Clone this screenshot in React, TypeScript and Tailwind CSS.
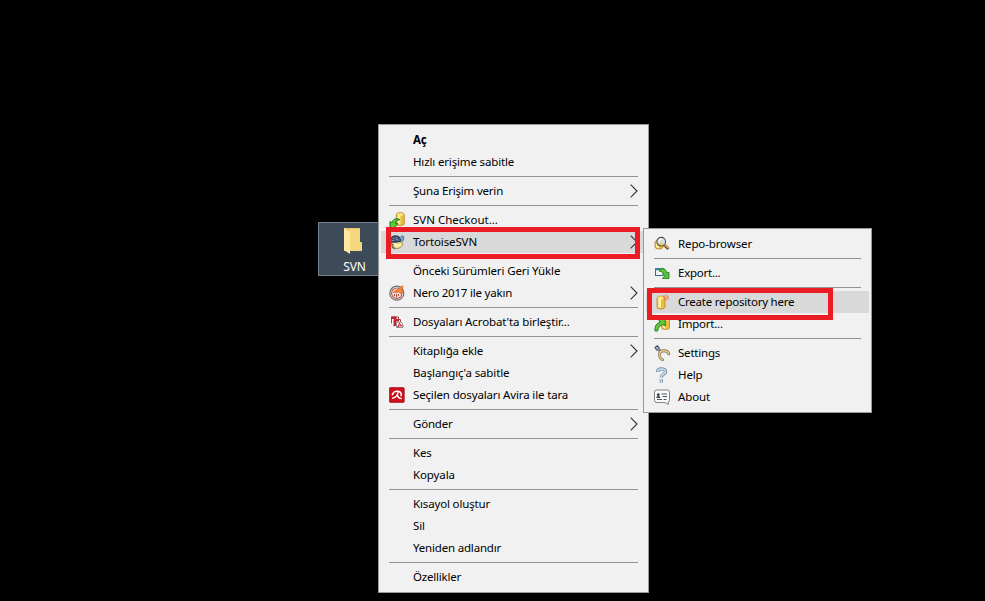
import type { ReactNode } from "react";

type Entry = { label: string; icon?: ReactNode; arrow?: boolean; bold?: boolean; active?: boolean; track?: string } | null;

function Cylinder({ x, y, h = 12 }: { x: number; y: number; h?: number }) {
  return (
    <g transform={`translate(${x} ${y})`}>
      <path d={`M0 2Q0 0 4 0T8 2V${h - 2}Q8 ${h} 4 ${h}T0 ${h - 2}Z`} fill="#e9bd3e" stroke="#b8862b" strokeWidth=".8" />
      <path d={`M1.2 3V${h - 2}Q2 ${h - 1} 4 ${h - 1}V3Z`} fill="#fff0a0" />
      <ellipse cx="4" cy="2" rx="3.3" ry="1.4" fill="#ffe98d" />
    </g>
  );
}

function Icon({ children }: { children: ReactNode }) {
  return <svg className="size-4 shrink-0" viewBox="0 0 16 16" fill="none">{children}</svg>;
}

const checkout = (
  <Icon>
    <Cylinder x={7.3} y={0.6} h={13} />
    <path d="M11 7.6C8 7.8 6.6 9.2 6.4 11.2L9 11.8 5 15.8H1V9.5L3 10.8C3.8 7.4 6.8 5.6 11 7.6Z" fill="#5ccb3a" stroke="#16791b" strokeWidth="1" />
  </Icon>
);
const importIcon = (
  <Icon>
    <Cylinder x={7.5} y={1.5} h={12} />
    <path d="M1 15C.5 9.5 3 7 6 6.5L4.5 3.3H11.3V10L8.8 8.6C5.5 9.5 4.3 11.5 3.6 15Z" fill="#65c63a" stroke="#16791b" strokeWidth=".9" />
  </Icon>
);
const tortoise = (
  <Icon>
    <path d="M1.5 8.5Q5 7 12.5 8L14 10Q12 14.8 7 14.7 2 14.2 1.5 8.5Z" fill="#e6d68c" stroke="#8e8048" strokeWidth=".8" />
    <path d="M.8 7.5Q1 2 6.5 1.8 11.5 1.8 11.8 7Q7 9.3.8 7.5Z" fill="#435775" stroke="#252f4b" />
    <path d="M4 3.5 5.5 5M8 2.8 7 5 10 6.5M2.5 6.5H5" stroke="#8094ad" />
    <path d="M11.5 3.5 13 1.5 15 3 14.3 6.5 12.4 8" fill="#73a4cf" stroke="#386d9b" strokeWidth=".8" />
    <path d="M5 10 8 12 12 10.5" stroke="#fff6bd" strokeWidth="2.2" />
    <path d="M1.5 9.5 4 10.5 3.5 13.5 6 14.5" stroke="#6d643f" strokeWidth="1.2" />
  </Icon>
);
const nero = (
  <Icon>
    <circle cx="7.8" cy="8.2" r="7" fill="#ece9e7" stroke="#6f6f6f" strokeWidth="1.2" />
    <circle cx="7.8" cy="8.2" r="5.2" fill="#f5e4dc" stroke="#b5553f" strokeWidth="1.1" />
    <path d="M5.5 9V11M7.5 9V12M9.5 9V11" stroke="#9c4a3c" strokeWidth="1" />
    <path d="M4.5 7.5C6 4 9 5.5 10 3.5 11 1.8 12.5 1.5 14 .8L13.2 4C14 6 12.8 7.7 12 9 11.3 6 8 7.8 4.5 7.5Z" fill="#f58a35" stroke="#d94b1a" strokeWidth=".6" />
  </Icon>
);
const acrobat = (
  <Icon>
    <path d="M1 2H11.5V5.5H15V14.5H4.5V10.5H1Z" fill="#fff" />
    <path d="M2.5 9.5V3H9.5V6" stroke="#8d4a4e" />
    <path d="M2 2.5H7.5V5H2Z" fill="#c8232c" />
    <path d="M5 12.5V5.5H11.5V8" stroke="#aa3a40" />
    <path d="M5 5.5H10V7.5H5ZM5 7.5H7V12H5Z" fill="#c8232c" />
    <path d="M7.5 8V13.5H14V10L12 8Z" fill="#faf6f6" stroke="#777" strokeWidth=".8" />
    <path d="M8.5 13Q10.5 11 10.3 8.8 11 11.5 13.5 11.8 10 11.3 8.5 13Z" stroke="#c8232c" />
  </Icon>
);
const avira = (
  <Icon>
    <rect x=".3" y=".5" width="15" height="15" rx="1.3" fill="#c9101b" stroke="#9c0d15" strokeWidth=".6" />
    <path d="M3.2 8.2C4 5.3 6.6 3.8 9.3 4.3 11.7 5 12.6 7 12 9.2" stroke="#fff" strokeWidth="1.5" />
    <path d="M9.3 4.8C8.5 8.8 6.5 10.8 3 11.4M8.5 8.2C8.8 10.6 10 11.6 12.8 11.6" stroke="#fff" strokeWidth="1.4" />
  </Icon>
);
const browser = (
  <Icon>
    <Cylinder x={1} y={4} h={9} />
    <circle cx="7.2" cy="5.7" r="4.3" fill="#cfe2f2" fillOpacity=".85" stroke="#454b51" strokeWidth="1.1" />
    <path d="M4.5 8Q6 5.5 9.5 8.2L7 9.5Z" fill="#edc658" />
    <path d="M4.8 5.3Q5 3 7.5 3" stroke="white" strokeWidth="1.3" />
    <path d="M10.3 8.8 14.5 13" stroke="#604223" strokeWidth="3" />
    <path d="M10.5 8.5 14.6 12.4" stroke="#e3a850" strokeWidth="1.5" />
  </Icon>
);
const exportIcon = (
  <Icon>
    <rect x="1.5" y="3.8" width="7.5" height="6.7" fill="#f3f7f9" stroke="#356b8d" />
    <path d="M1 3.3H9.5V5.3H1Z" fill="#3b7fa9" />
    <path d="M5.5 4.5C8.5 2.7 12.2 3.5 12.7 7.8L15 7.3V13.5H8.3L10.2 11.5C9.7 7.7 8 6.3 5.5 6.5Z" fill="#56c336" stroke="#21771c" strokeWidth=".8" />
  </Icon>
);
const create = (
  <Icon>
    <Cylinder x={3} y={2} h={13} />
    <path d="M12 .5V6.5M9 3.5H15M10 1.5 14 5.5M14 1.5 10 5.5" stroke="#df5c38" strokeWidth=".9" />
    <circle cx="12" cy="3.5" r="1.2" fill="#ffbd78" />
  </Icon>
);
const settings = (
  <Icon>
    <path d="M1 2.5 3.2.8 5 2.5 4.6 4.8 2.5 5Z" fill="#a9b7c9" stroke="#46536a" strokeWidth="1.1" />
    <path d="M4 4 7 6.5" stroke="#4e5969" strokeWidth="2.8" />
    <path d="M4 4 6.8 6.2" stroke="#c2cedb" strokeWidth="1" />
    <path d="M6.3 6.3C5.3 9 4.8 13.5 8.5 14.8M6.3 6.3C9 5.6 13.8 5 14.8 8.8" stroke="#846e45" strokeWidth="2.8" strokeLinecap="round" />
    <path d="M6.3 6.3C5.3 9 4.8 13.5 8.5 14.8M6.3 6.3C9 5.6 13.8 5 14.8 8.8" stroke="#e3cc93" strokeWidth="1.4" strokeLinecap="round" />
  </Icon>
);
const help = (
  <Icon>
    <path d="M3.5 5C3.5.9 11.5.8 11.5 4.7 11.5 7.5 7.3 6.8 7.3 10.6M7.3 12.6V15.4" stroke="#7892a7" strokeWidth="3.4" />
    <path d="M3.5 4.6C3.8 1.2 11.2 1.1 11.4 4.7 11.4 7.2 7.2 6.9 7.2 10.3M7.2 13V15" stroke="#cfe2ef" strokeWidth="1.5" />
  </Icon>
);
const about = (
  <Icon>
    <path d="M2.5 1H13.3Q15.5 1 15.5 3.2V10.8Q15.5 13 14 13L14.4 15.6 11 13.5H2.7Q.5 13.5.5 11.3V3Q.5 1 2.5 1Z" fill="#fafafa" stroke="#74767e" strokeWidth=".9" />
    <path d="M2.2 9Q2.5 7 4.3 7T6.5 9Z" fill="#343c4c" /><circle cx="4.3" cy="5.7" r="1.4" fill="#343c4c" />
    <path d="M7.5 5H13M8.5 7.5H13M3 10.5H8M9.5 10.5H12.5" stroke="#4d5463" />
  </Icon>
);

const mainEntries: Entry[] = [
  { label: "Aç", bold: true },
  { label: "Hızlı erişime sabitle", track: "tracking-[-0.15px]" },
  null,
  { label: "Şuna Erişim verin", arrow: true, track: "tracking-[-0.2px]" },
  null,
  { label: "SVN Checkout...", icon: checkout, track: "tracking-[0px]" },
  { label: "TortoiseSVN", icon: tortoise, arrow: true, active: true },
  null,
  { label: "Önceki Sürümleri Geri Yükle", track: "tracking-[-0.13px]" },
  { label: "Nero 2017 ile yakın", icon: nero, arrow: true, track: "tracking-[-0.2px]" },
  null,
  { label: "Dosyaları Acrobat'ta birleştir...", icon: acrobat },
  null,
  { label: "Kitaplığa ekle", arrow: true, track: "tracking-[-0.15px]" },
  { label: "Başlangıç'a sabitle" },
  { label: "Seçilen dosyaları Avira ile tara", icon: avira, track: "tracking-[-0.15px]" },
  null,
  { label: "Gönder", arrow: true, track: "tracking-[-0.2px]" },
  null,
  { label: "Kes" },
  { label: "Kopyala" },
  null,
  { label: "Kısayol oluştur", track: "tracking-[-0.15px]" },
  { label: "Sil" },
  { label: "Yeniden adlandır", track: "tracking-[-0.18px]" },
  null,
  { label: "Özellikler", track: "tracking-[-0.2px]" },
];

const svnEntries: Entry[] = [
  { label: "Repo-browser", icon: browser },
  null,
  { label: "Export...", icon: exportIcon, track: "tracking-[-0.25px]" },
  null,
  { label: "Create repository here", icon: create, active: true, track: "tracking-[-0.22px]" },
  { label: "Import...", icon: importIcon, track: "tracking-[-0.22px]" },
  null,
  { label: "Settings", icon: settings, track: "tracking-[-0.2px]" },
  { label: "Help", icon: help },
  { label: "About", icon: about },
];

function Menu({ entries, className }: { entries: Entry[]; className: string }) {
  return (
    <div className={`absolute flex flex-col border border-[#999] bg-[#f1f1f1] px-0.5 py-1 ${className}`}>
      {entries.map((e, i) =>
        e ? (
          <div key={i} className={`flex h-[22px] items-center pl-2 pr-2 ${e.active ? "bg-[#d9d9d9]" : ""}`}>
            <span className="flex w-6 shrink-0">{e.icon}</span>
            <span className={`flex-1 whitespace-nowrap leading-[22px] ${e.bold ? "font-bold" : ""} ${e.track ?? "tracking-[-0.12px]"}`}>{e.label}</span>
            {e.arrow && (
              <svg className="h-3.5 w-2 shrink-0" viewBox="0 0 8 14" fill="none">
                <path d="M.7.7 7 7 .7 13.3" stroke="#333" strokeWidth="1.1" />
              </svg>
            )}
          </div>
        ) : (
          <div key={i} className="flex h-[7px] shrink-0 items-center pl-2 pr-2">
            <div className="h-px w-full bg-[#919191]" />
          </div>
        ),
      )}
    </div>
  );
}

export default function App() {
  return (
    <main className="relative h-[601px] w-[985px] overflow-hidden bg-black font-['Noto_Sans','Open_Sans',sans-serif] text-[11.5px] text-black">
      <div className="absolute left-[318px] top-[222px] flex h-[54px] w-[73px] flex-col items-center border border-[#718190] bg-[#3d4b59] pt-1 text-white">
        <svg className="mr-[3px] h-[27px] w-[22px] shrink-0" viewBox="0 0 22 27">
          <path d="M2 1H18V15H20V24H2Z" fill="#e8c66d" />
          <path d="M7 2H18V15L20 16V24H7Z" fill="#f5d77f" />
          <path d="M2 1 8 5V27L2 23Z" fill="#ffe8a2" />
        </svg>
        <span className="mt-1 shrink-0 text-[12px] leading-[17px] tracking-[-0.2px]">SVN</span>
      </div>
      <Menu entries={mainEntries} className="left-[378px] top-[124px] h-[469px] w-[271px]" />
      <Menu entries={svnEntries} className="left-[643px] top-[228px] h-[185px] w-[229px]" />
      <div className="absolute left-[386px] top-[227px] h-8 w-[254px] border-[5px] border-[#eb1c24]" />
      <div className="absolute left-[647px] top-[288px] h-8 w-[186px] border-[5px] border-[#eb1c24]" />
    </main>
  );
}
